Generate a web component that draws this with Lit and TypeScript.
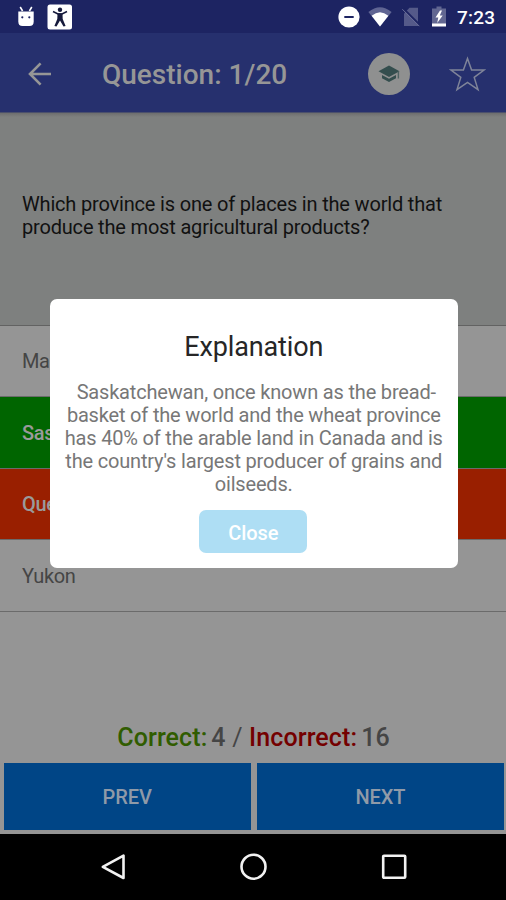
import { LitElement, html, css, svg } from "lit";
import { customElement } from "lit/decorators.js";
import { classMap } from "lit/directives/class-map.js";

interface Answer {
  text: string;
  state?: "right" | "wrong";
}

const ANSWERS: Answer[] = [
  { text: "Manitoba" },
  { text: "Saskatchewan", state: "right" },
  { text: "Quebec", state: "wrong" },
  { text: "Yukon" },
];

@customElement("status-bar")
class StatusBar extends LitElement {
  static styles = css`
    :host { display: block; height: 33px; flex: none; background: #1d2462; }
    .bar { display: flex; align-items: center; height: 100%; box-sizing: border-box; padding: 0 10px 0 17px; }
    svg { display: block; flex: none; }
    .debug { margin-right: 12px; margin-top: -2px; }
    .spacer { flex: 1; }
    .dnd { margin-right: 8px; }
    .wifi { margin-right: 10px; }
    .sim { margin-right: 12px; }
    .battery { margin-right: 11px; }
    .time { font-size: 19px; line-height: 20px; font-weight: 500; color: #fff; width: 39px; white-space: nowrap; letter-spacing: 0.2px; margin-top: 3px; }
  `;
  render() {
    return html`<div class="bar">
      <svg class="debug" width="18" height="22" viewBox="0 0 18 22">
        <path d="M3.2 2 L5.6 6 M14.8 2 L12.4 6" stroke="#fff" stroke-width="1.6" />
        <path d="M1.3 6.5 H16.7 V16.5 Q16.7 21 12.5 21 H5.5 Q1.3 21 1.3 16.5 Z" fill="#fff" />
        <circle cx="5.3" cy="12.3" r="1.1" fill="#1d2462" /><circle cx="12.3" cy="12.3" r="1.1" fill="#1d2462" />
      </svg>
      <svg width="26" height="26" viewBox="0 0 26 26">
        <rect x="0.5" y="0.5" width="24.5" height="25" rx="2.5" fill="#fff" />
        <circle cx="13" cy="5.8" r="2.2" fill="#161a3c" />
        <path d="M6 7.5 L11 10 H15 L20 7.5" fill="none" stroke="#161a3c" stroke-width="1.6" />
        <path d="M10.5 9.3 H15.5 L15.7 15 L18.6 22 L16.5 22.5 L13 16.5 L9.5 22.5 L7.4 22 L10.3 15 Z" fill="#161a3c" />
      </svg>
      <div class="spacer"></div>
      <svg class="dnd" width="22" height="22" viewBox="0 0 22 22">
        <circle cx="11" cy="11" r="10.6" fill="#fff" /><path d="M6.3 11 H15.7" stroke="#1d2462" stroke-width="2" />
      </svg>
      <svg class="wifi" width="24" height="20" viewBox="0 0 24 20">
        <path d="M0.4 5 Q12 -4.5 23.6 5 L12 19.5 Z" fill="#606593" />
        <path d="M3.6 8.8 Q12 1.8 20.4 8.8 L12 19.5 Z" fill="#fff" />
      </svg>
      <svg class="sim" width="18" height="20" viewBox="0 0 18 20">
        <path d="M7.5 0.8 H16 V19 H2 V6.5 Z" fill="#555a89" />
        <path d="M1.2 1.4 L18 18.2" stroke="#1d2462" stroke-width="2" /><path d="M0.3 2.2 L17.3 19.2" stroke="#6b709a" stroke-width="1" />
      </svg>
      <svg class="battery" width="14" height="21" viewBox="0 0 14 21">
        <path d="M4.5 0.5 H9.5 V2.5 H14 V18 H0 V2.5 H4.5 Z" fill="#626791" />
        <path d="M0 17.5 H14 V20.5 H0 Z M8 4.5 L3.5 11.5 H6.3 L5.2 17 L10.7 9.5 H7.8 L10 4.5 Z" fill="#fff" />
      </svg>
      <span class="time">7:23</span>
    </div>`;
  }
}

@customElement("app-header")
class AppHeader extends LitElement {
  static styles = css`
    :host { display: block; height: 79px; flex: none; background: #26306e; border-bottom: 1px solid #4b506c; }
    .bar { display: flex; align-items: center; height: 100%; box-sizing: border-box; padding: 2px 20px 0 28px; }
    svg { display: block; flex: none; }
    .title { flex: 1; margin: 2px 0 0 50px; font-size: 28px; line-height: 32px; font-weight: 500; color: #969696; white-space: nowrap; letter-spacing: 0; }
    .cap { width: 42px; height: 42px; border-radius: 50%; background: #8f9090; display: flex; align-items: center; justify-content: center; margin-right: 39px; }
  `;
  render() {
    return html`<div class="bar">
      <svg width="24" height="24" viewBox="0 0 24 24"><path d="M12.6 1.4 L2 12 L12.6 22.6 M2 12 H23" fill="none" stroke="#969696" stroke-width="2.6" /></svg>
      <div class="title">Question: 1/20</div>
      <div class="cap">
        <svg width="22" height="20" viewBox="0 0 22 20">
          <path d="M11 1.5 L21.5 7.3 L11 13 L0.5 7.3 Z" fill="#344e4e" />
          <path d="M20.4 7.5 V14.5" stroke="#4f6262" stroke-width="1.4" />
          <path d="M4 11 L11 14.8 L18 11 V14.2 L11 18 L4 14.2 Z" fill="#344e4e" />
        </svg>
      </div>
      <svg width="37" height="36" viewBox="0 0 37 36"><path d="M18.5 2.5 L22.6 14.1 H35 L25.2 21.4 L29 33.6 L18.5 26.3 L8 33.6 L11.8 21.4 L2 14.1 H14.4 Z" fill="none" stroke="#7f8499" stroke-width="1.5" /></svg>
    </div>`;
  }
}

@customElement("explanation-dialog")
class ExplanationDialog extends LitElement {
  static styles = css`
    :host { display: block; width: 407.5px; height: 269px; border-radius: 7px; background: #fff; }
    .card { height: 100%; box-sizing: border-box; padding-top: 32px; display: flex; flex-direction: column; align-items: center; }
    h2 { margin: 0; font-size: 27px; line-height: 32px; font-weight: 400; color: #262626; letter-spacing: -0.15px; }
    p { margin: 18px 0 0; text-align: center; font-size: 20px; line-height: 23px; color: #777; white-space: nowrap; letter-spacing: -0.18px; }
    .lead { padding-left: 5px; }
    button { margin: 14px 1px 0 0; border: 0; border-radius: 7px; width: 108px; height: 43px; padding: 2px 0 0; background: #aedef4; color: #fff; font: 500 20px/24px Roboto, sans-serif; letter-spacing: -0.1px; }
  `;
  render() {
    return html`<div class="card">
      <h2>Explanation</h2>
      <p><span class="lead">Saskatchewan, once known as the bread-</span><br />basket of the world and the wheat province<br />has 40% of the arable land in Canada and is<br />the country's largest producer of grains and<br />oilseeds.</p>
      <button>Close</button>
    </div>`;
  }
}

@customElement("nav-bar")
class NavBar extends LitElement {
  static styles = css`
    :host { display: block; height: 66px; flex: none; background: #000; }
    .bar { display: flex; justify-content: space-between; align-items: center; height: 100%; padding: 0 98px 0 100px; }
    svg { display: block; }
  `;
  render() {
    const icon = (shape: unknown) => html`<svg width="28" height="28" viewBox="0 0 28 28" fill="none" stroke="#f2f2f2" stroke-width="2.6">${shape}</svg>`;
    return html`<div class="bar">
      ${icon(svg`<path d="M23.5 2.6 V25 L2.8 13.8 Z" stroke-linejoin="round" />`)}
      ${icon(svg`<circle cx="13.5" cy="13.7" r="12" />`)}
      ${icon(svg`<rect x="3.2" y="2.8" width="22" height="22" rx="0.8" />`)}
    </div>`;
  }
}

@customElement("app-root")
class AppRoot extends LitElement {
  static styles = css`
    :host { display: block; width: 506px; height: 900px; overflow: hidden; position: relative; background: #959595; font-family: Roboto, sans-serif; }
    .page { display: flex; flex-direction: column; height: 100%; }
    .question { flex: none; height: 212.5px; box-sizing: border-box; padding: 80px 22px 0; background: linear-gradient(#6d6e6e, #7e807f 4px); font-size: 20px; line-height: 23px; letter-spacing: -0.18px; color: #111; white-space: nowrap; border-bottom: 1px solid #626262; }
    .answer { flex: none; height: 71.6px; box-sizing: border-box; display: flex; align-items: center; padding: 1px 22px 0; border-bottom: 1px solid #6b6b6b; font-size: 20px; line-height: 24px; letter-spacing: -0.35px; color: #454545; }
    .right { background: #006500; color: #9a9a9a; font-weight: 500; }
    .wrong { background: #991f00; color: #9a9a9a; font-weight: 500; }
    .score { margin-top: auto; display: flex; justify-content: center; align-items: baseline; height: 38px; padding-left: 1px; font-size: 25px; line-height: 30px; font-weight: 500; letter-spacing: 0.1px; color: #454545; white-space: nowrap; }
    .ok { color: #305c00; margin-right: 4px; }
    .bad { color: #740000; margin-right: 4px; }
    .slash { font-weight: 400; margin: 0 6.5px; }
    .actions { flex: none; display: grid; grid-template-columns: 1fr 1fr; gap: 6px; padding: 2px 2px 4px 3.5px; height: 67px; }
    .actions button { border: 0; background: #004586; color: #8f9aa8; font: 500 20px/24px Roboto, sans-serif; letter-spacing: -0.1px; padding: 1px 0 0; }
    .overlay { position: absolute; left: 50px; top: 299px; }
  `;
  render() {
    return html`<div class="page">
        <status-bar></status-bar>
        <app-header></app-header>
        <div class="question">Which province is one of places in the world that<br />produce the most agricultural products?</div>
        ${ANSWERS.map((a) => html`<div class=${classMap({ answer: true, right: a.state === "right", wrong: a.state === "wrong" })}>${a.text}</div>`)}
        <div class="score"><span class="ok">Correct:</span>4<span class="slash">/</span><span class="bad">Incorrect:</span>16</div>
        <div class="actions"><button>PREV</button><button>NEXT</button></div>
        <nav-bar></nav-bar>
      </div>
      <explanation-dialog class="overlay"></explanation-dialog>`;
  }
}
